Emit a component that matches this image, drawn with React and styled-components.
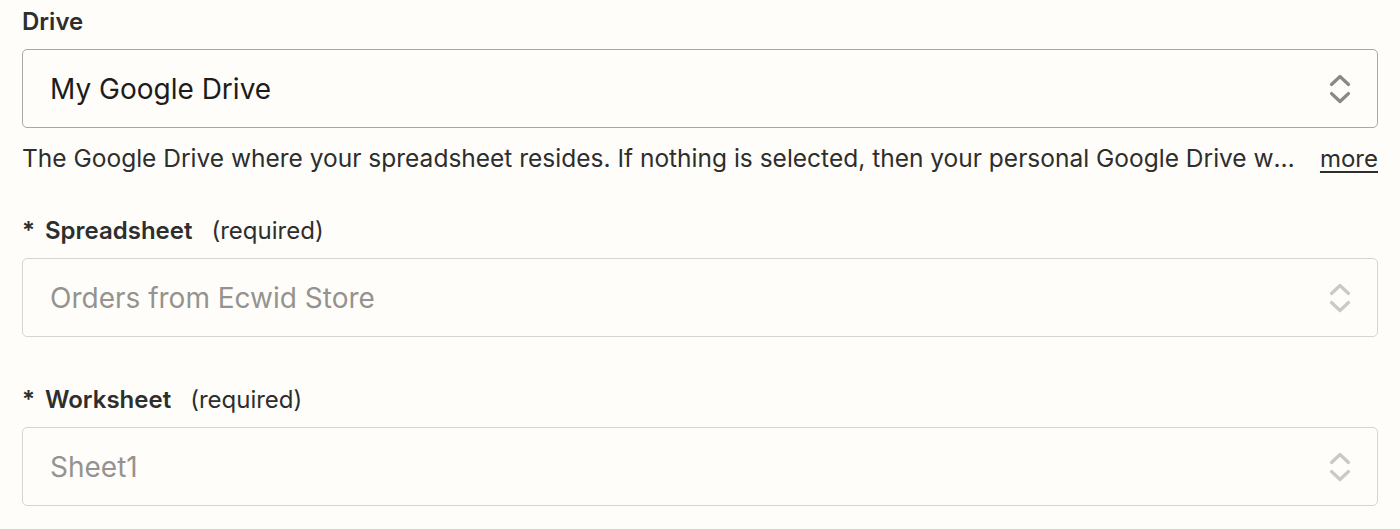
import React from "react";
import styled, { createGlobalStyle } from "styled-components";

const Global = createGlobalStyle`
  html, body { margin: 0; padding: 0; background: #fffdf9; }
  body { font-family: Inter, "Noto Sans", sans-serif; color: #2d2e2e; }
`;

const Page = styled.div`
  display: flex;
  flex-direction: column;
  padding: 6px 22px 0 22px;
  width: 1400px;
  box-sizing: border-box;
`;

const Field = styled.div`
  display: flex;
  flex-direction: column;
  margin-top: ${(p) => p.$top || 0}px;
`;

const Label = styled.div`
  display: flex;
  align-items: center;
  height: 32px;
  font-size: 24px;
  line-height: 32px;
  font-weight: 600;
  color: #2d2e2e;
  margin-bottom: 11px;
`;

const Star = styled.span`
  font-weight: 600;
  margin-right: 10px;
`;

const Required = styled.span`
  font-weight: 400;
  margin-left: 19px;
  color: #2d2e2e;
`;

const SelectBox = styled.div`
  display: flex;
  align-items: center;
  justify-content: space-between;
  height: 79px;
  box-sizing: border-box;
  border: 1.5px solid ${(p) => (p.$disabled ? "#d6d5d2" : "#a9a8a5")};
  border-radius: 5px;
  background: #fffdf9;
  padding: 0 25px 0 27px;
`;

const Value = styled.span`
  font-size: 28px;
  font-weight: 400;
  color: ${(p) => (p.$disabled ? "#95938f" : "#1c1c1c")};
`;

const Help = styled.div`
  display: flex;
  align-items: center;
  justify-content: space-between;
  height: 32px;
  margin-top: 14px;
  font-size: 24.5px;
  color: #2d2e2e;
`;

const HelpText = styled.span`
  white-space: nowrap;
  overflow: hidden;
  text-overflow: ellipsis;
  flex: 1;
  min-width: 0;
  margin-right: 20px;
`;

const More = styled.a`
  flex: none;
  font-size: 24px;
  color: #2d2e2e;
  text-decoration: underline;
  text-underline-offset: 4px;
  text-decoration-thickness: 2px;
  cursor: pointer;
`;

const Chevrons = ({ disabled }) => (
  <svg width="24" height="34" viewBox="0 0 24 34" fill="none">
    <path
      d="M3.5 12.5 L12 4.5 L20.5 12.5"
      stroke={disabled ? "#cac9c6" : "#8a8986"}
      strokeWidth="3.2"
      strokeLinecap="round"
      strokeLinejoin="round"
    />
    <path
      d="M3.5 21.5 L12 29.5 L20.5 21.5"
      stroke={disabled ? "#cac9c6" : "#8a8986"}
      strokeWidth="3.2"
      strokeLinecap="round"
      strokeLinejoin="round"
    />
  </svg>
);

export default function App() {
  return (
    <>
      <Global />
      <Page>
        <Field>
          <Label>Drive</Label>
          <SelectBox>
            <Value>My Google Drive</Value>
            <Chevrons />
          </SelectBox>
          <Help>
            <HelpText>
              The Google Drive where your spreadsheet resides. If nothing is selected, then your personal Google Drive will be used.
            </HelpText>
            <More>more</More>
          </Help>
        </Field>
        <Field $top={41}>
          <Label>
            <Star>*</Star>Spreadsheet<Required>(required)</Required>
          </Label>
          <SelectBox $disabled>
            <Value $disabled>Orders from Ecwid Store</Value>
            <Chevrons disabled />
          </SelectBox>
        </Field>
        <Field $top={47}>
          <Label>
            <Star>*</Star>Worksheet<Required>(required)</Required>
          </Label>
          <SelectBox $disabled>
            <Value $disabled>Sheet1</Value>
            <Chevrons disabled />
          </SelectBox>
        </Field>
      </Page>
    </>
  );
}
